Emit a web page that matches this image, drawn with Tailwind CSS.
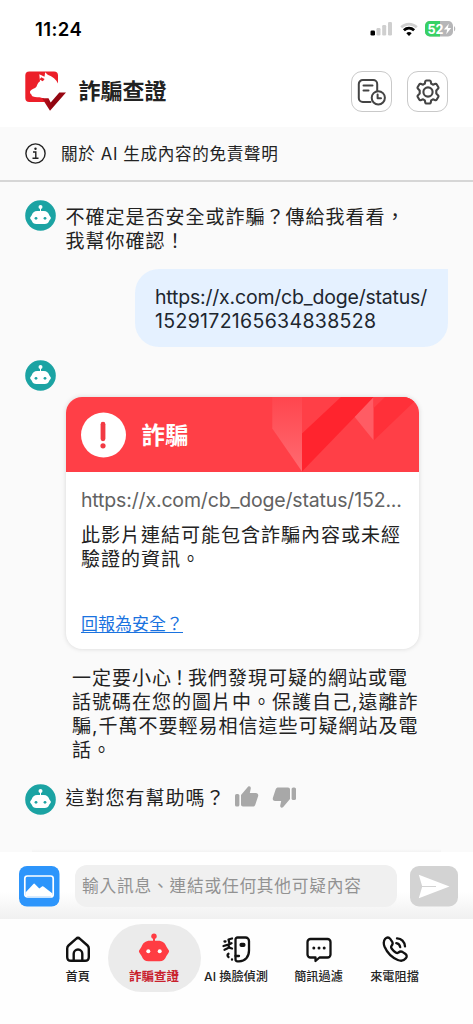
<!DOCTYPE html>
<html lang="zh-Hant">
<head>
<meta charset="utf-8">
<meta name="viewport" content="width=device-width, initial-scale=1">
<title>詐騙查證</title>
<script src="https://cdn.jsdelivr.net/npm/@tailwindcss/browser@4"></script>
</head>
<body class="w-[473px] h-[1024px] overflow-hidden bg-white font-['Inter','Noto_Sans_CJK_TC',sans-serif] text-[#222]">
<svg class="hidden">
  <symbol id="bot" viewBox="0 0 31 31">
    <circle cx="15.5" cy="15.5" r="15.3" fill="#1ba3a3"/>
    <circle cx="15.5" cy="7" r="2" fill="#fff"/>
    <path d="M15 7h1v5h-1z" fill="#fff"/>
    <path d="M12.2 11h6.6c3 0 4.700 1.700 5.500 4.300l1.200 1.700c.5.700.5 1.200 0 1.900l-1.300 1.900c-.8 2.200-2.200 3.200-4.500 3.200h-8.400c-2.300 0-3.700-1-4.500-3.200l-1.300-1.900c-.5-.7-.5-1.200 0-1.900l1.200-1.700C7.500 12.700 9.200 11 12.200 11z" fill="#fff"/>
    <circle cx="11" cy="18.300" r="1.400" fill="#1ba3a3"/><circle cx="20" cy="18.300" r="1.400" fill="#1ba3a3"/>
  </symbol>
</svg>
<div class="flex h-full flex-col">
  <div class="flex h-[57px] shrink-0 items-center justify-between pl-[35px] pr-[17px] pt-px">
    <div class="text-[18.5px] leading-none font-semibold text-black tracking-[0.4px]">11:24</div>
    <div class="flex items-center gap-[7px]">
      <svg width="23" height="16" viewBox="0 0 23 16"><rect x="0.500" y="9.500" width="4.500" height="5" rx="1.300"/><g fill="#cfcfcf"><rect x="6.500" y="7" width="4" height="7.500" rx="1.200"/><rect x="12.200" y="4" width="4" height="10.500" rx="1.200"/><rect x="18" y="1" width="4" height="13.500" rx="1.200"/></g></svg>
      <svg width="18" height="15" viewBox="0 0 18 15" fill="none"><path d="M1.200 5.200C5.800 1 12.200 1 16.800 5.200" stroke="#cfcfcf" stroke-width="2.700"/><path d="M3.900 8.300c3-2.800 7.200-2.800 10.200 0" stroke="#000" stroke-width="2.800"/><path d="M6.300 11.200c1.600-1.500 3.800-1.500 5.400 0L9 14z" fill="#000"/></svg>
      <svg width="31" height="16" viewBox="0 0 31 16"><defs><clipPath id="bat"><rect width="28" height="15.500" rx="4.800"/></clipPath></defs><g clip-path="url(#bat)"><path d="M0 0h28v16H0z" fill="#b6b6b8"/><path d="M0 0h15v16H0z" fill="#38d165"/></g><path d="M29 5.300c1.700.5 1.700 4.400 0 5z" fill="#b6b6b8"/><text x="2.500" y="12.600" font-family="Inter" font-size="13.500" font-weight="700" fill="#fff" textLength="16" lengthAdjust="spacingAndGlyphs">52</text><path d="M23.800 2.700l-4.900 5.900h3.300l-1 4.600 5-6.200h-3.300z" fill="#fff"/></svg>
    </div>
  </div>
  <header class="flex h-[70px] shrink-0 items-center pl-[25px] pr-[25px] pb-px">
    <svg class="mt-[-1px]" width="41" height="40" viewBox="0 0 41 40">
      <defs><linearGradient id="ck" x1="0" x2="1"><stop offset="0" stop-color="#c3101b"/><stop offset=".45" stop-color="#8e0510"/><stop offset="1" stop-color="#9c0712"/></linearGradient></defs>
      <rect x=".3" y=".5" width="32.700" height="30.500" rx="4" fill="#ec1f29"/>
      <path d="M14.300 3.300l5.200 2.500.7-4.500 2.500 2.400c4.800 1.400 8.500 4.700 10.600 9.300V31.500H20l-1.500-4.500c-1.500.2-2.500-.8-4-.8-2.500 0-4.500.2-6.500-.6-.9-.4-1.300-1.300-1.600-2.200-1.500-.8-1.600-2-1.200-3.300 1.500-2.300 4.800-2.200 6.200-4.300.8-1.600 1.200-3.800 3.600-5.500z" fill="#fff"/>
      <path d="M16.300 6.300l3.300 1.600-1.800 2.300-3.300-1.600z" fill="#ec1f29"/>
      <path d="M17 27.200h6.500l2.200 4.200 8.600-9.900H41L25 39.800z" fill="url(#ck)"/>
    </svg>
    <h1 class="ml-[12.500px] -mt-px text-[22px] leading-none font-bold">詐騙查證</h1>
    <div class="ml-auto flex gap-[15.500px]">
      <div class="flex size-[41px] items-center justify-center rounded-[11px] border border-[#c9c9c9]">
        <svg width="30" height="30" viewBox="0 0 30 30" fill="none" stroke="#444" stroke-width="2" stroke-linecap="round" stroke-linejoin="round"><path d="M14.500 25H6.800a4 4 0 0 1-4-4V7a4 4 0 0 1 4-4h10.400a4 4 0 0 1 4 4v6.500"/><path d="M7.500 8.500h9M7.500 13.500h5"/><circle cx="22.300" cy="20.800" r="6.600"/><path d="M21.600 17.500v3.800h3.400"/></svg>
      </div>
      <div class="flex size-[41px] items-center justify-center rounded-[11px] border border-[#c9c9c9]">
        <svg width="26" height="26" viewBox="0 0 26 26" fill="none" stroke="#444" stroke-width="2.100" stroke-linejoin="round"><circle cx="13" cy="13" r="4.600"/><path d="M11.300 1.500h3.400q.8 0 1 .8l.5 2.400 1.700 1 2.500-.9q.8-.3 1.200.4l1.800 3q.4.700-.2 1.300L21.300 11.500v3l1.900 2q.6.600.2 1.300l-1.800 3q-.4.700-1.200.4l-2.500-.9-1.700 1-.5 2.400q-.2.800-1 .8h-3.400q-.8 0-1-.8l-.5-2.400-1.700-1-2.500.9q-.8.300-1.200-.4l-1.800-3q-.4-.7.200-1.300l1.900-2v-3l-1.900-2q-.6-.6-.2-1.300l1.800-3q.4-.7 1.200-.4l2.500.9 1.700-1 .5-2.400q.2-.8 1-.8z"/></svg>
      </div>
    </div>
  </header>
  <div class="flex h-[55px] shrink-0 items-center border-b-2 border-[#d6d6d6] bg-[#fafafa] pl-[25px]">
    <svg width="21" height="21" viewBox="0 0 21 21" fill="none" stroke="#222" stroke-width="1.400"><circle cx="10.500" cy="10.500" r="9.600"/><path d="M8 9h2.800v6M7.500 15.200h6"/><circle cx="10.500" cy="5.800" r="1.200" fill="#222" stroke="none"/></svg>
    <span class="ml-[15px] whitespace-nowrap pt-px text-[16.6px] leading-none tracking-[0.65px]">關於 AI 生成內容的免責聲明</span>
  </div>
  <main class="flex h-[670px] shrink-0 flex-col bg-[#fafafa] text-[19px] leading-[24px] tracking-[1px] whitespace-nowrap">
    <div class="flex items-start pl-[25px] pt-[18px]">
      <svg class="size-[31px]"><use href="#bot"/></svg>
      <p class="ml-[9.500px] pt-[6px]">不確定是否安全或詐騙？傳給我看看，<br>我幫你確認！</p>
    </div>
    <div class="ml-[135px] mt-[15px] h-[78px] w-[313px] rounded-[24px] rounded-tr-none bg-[#e5f1ff] pl-[20px] pt-[16px] text-[19.5px] tracking-[-0.2px] text-[#20262e]">https://x.com/cb_doge/status/<br><span class="tracking-[0.32px]">1529172165634838528</span></div>
    <svg class="ml-[25px] mt-[13px] size-[31px] shrink-0"><use href="#bot"/></svg>
    <section class="ml-[66px] mt-[6px] h-[252px] w-[353px] shrink-0 overflow-hidden rounded-[16px] bg-white shadow-[0_0_5px_rgba(0,0,0,0.14)]">
      <div class="relative flex h-[75px] items-center bg-[#ff3f47] pl-[15px]">
        <svg class="absolute inset-0" width="353" height="75" viewBox="0 0 353 75">
          <defs><linearGradient id="f1" x1="0" y1="0" x2="0" y2="1"><stop offset="0" stop-color="#ff464e"/><stop offset="1" stop-color="#ff6b71"/></linearGradient></defs>
          <path d="M206.300 0H236V74.500L206.300 31.500z" fill="url(#f1)"/>
          <path d="M275 0h33L236 74.500V36.500z" fill="#ff242e"/>
          <path d="M307.700 0V43.500L288.700 20z" fill="#ff5c64"/>
          <path d="M307.700 0H353L307.700 43.500z" fill="#ff3039"/>
          <path d="M307.700 0H319L307.700 11z" fill="#ff3f47"/>
        </svg>
        <svg class="relative" width="46" height="46" viewBox="0 0 46 46"><circle cx="22.500" cy="23" r="22.500" fill="#fff"/><path d="M22 12.200V26.800" stroke="#f23a43" stroke-width="4.800" stroke-linecap="round"/><circle cx="22" cy="33.800" r="2.600" fill="#f23a43"/></svg>
        <b class="relative ml-[14.500px] pt-[2px] text-[23.500px] tracking-normal text-white">詐騙</b>
      </div>
      <div class="px-[15px] pt-[16px]">
        <div class="text-[19.5px] tracking-[-0.16px] text-[#626262]">https://x.com/cb_doge/status/152...</div>
        <p class="mt-[12px]">此影片連結可能包含詐騙內容或未經<br>驗證的資訊。</p>
        <a class="mt-[40px] inline-block text-[17px] leading-[24px] tracking-normal text-[#1a73e0] underline decoration-1 underline-offset-[2px]">回報為安全？</a>
      </div>
    </section>
    <p class="ml-[72px] mt-[18px]">一定要小心<span class="-ml-[2px] -mr-[2px]">！</span>我們發現可疑的網站或電<br>話號碼在您的圖片中。保護自己,遠離詐<br>騙,千萬不要輕易相信這些可疑網站及電<br>話。</p>
    <div class="mt-[21px] flex items-start pl-[25px]">
      <svg class="size-[31px]"><use href="#bot"/></svg>
      <span class="ml-[9.500px] pt-[3px]">這對您有幫助嗎？</span>
      <svg class="ml-[8px] mt-[1px]" width="25" height="24" viewBox="0 0 25 24" fill="#a8a8a8"><rect x="1" y="9" width="4.400" height="12.500" rx="1.600"/><path d="M7 10l7-8.200c1.600-1.200 3 .1 2.800 1.700l-1 4.500h6c2 0 2.900 1.700 2.300 3.300l-2.800 8.400c-.5 1.300-1.300 1.900-2.600 1.900H9c-1.200 0-2-.8-2-2z"/></svg>
      <svg class="ml-[13px] mt-[1px] rotate-180" width="25" height="24" viewBox="0 0 25 24" fill="#a8a8a8"><rect x="1" y="9" width="4.400" height="12.500" rx="1.600"/><path d="M7 10l7-8.200c1.600-1.200 3 .1 2.800 1.700l-1 4.500h6c2 0 2.900 1.700 2.300 3.300l-2.800 8.400c-.5 1.300-1.300 1.900-2.600 1.900H9c-1.200 0-2-.8-2-2z"/></svg>
    </div>
    <div class="mx-8 mt-auto h-[3px] bg-linear-to-b from-transparent to-[#f3f3f3]"></div>
  </main>
  <div class="flex h-[67px] shrink-0 items-start bg-linear-to-b from-white from-60% to-[#f0f0f0] pl-[19px] pt-[13px]">
    <svg class="mt-px" width="41" height="41" viewBox="0 0 41 41"><rect width="40.500" height="40.500" rx="8" fill="#2d95fb"/><rect x="5.800" y="10" width="28.400" height="21" rx="2.500" fill="none" stroke="#fff" stroke-width="1.700"/><path d="M6.500 26.500l7.700-8.300c.7-.8 1.200-.8 1.900 0l4.200 4.300 2.700-2c.7-.5 1.200-.4 1.800.2l8.700 6.800V30.300H6.500z" fill="#fff"/></svg>
    <div class="ml-[15px] flex h-[42px] w-[322px] items-center rounded-[12px] bg-[#f0f0f0] pl-[7px] pt-[2px] text-[16.7px] tracking-[0.8px] whitespace-nowrap text-[#929292]">輸入訊息、連結或任何其他可疑內容</div>
    <svg class="ml-[13px] mt-px" width="49" height="41" viewBox="0 0 49 41"><rect width="48" height="40.500" rx="9" fill="#d3d3d3"/><path d="M8.800 8.800L39.500 20.500 8.800 32.300l3.300-11.300H26v-1H12.100z" fill="#fff"/></svg>
  </div>
  <nav class="flex h-[105px] shrink-0 items-start bg-[#fefefe] pl-[48px] pt-[5px] text-center text-[12.2px] leading-[16px] whitespace-nowrap">
    <div class="flex w-[59.500px] flex-col items-center pt-[11px]">
      <svg width="28" height="28" viewBox="0 0 28 28" fill="none" stroke="#111" stroke-width="2.400" stroke-linejoin="round"><path d="M4.500 10.500L12 3.800c1.300-1.200 2.700-1.200 4 0l7.500 6.700c1 .9 1.300 1.700 1.300 3V22c0 2.500-1.300 3.800-3.800 3.800H7c-2.500 0-3.800-1.300-3.800-3.800v-8.500c0-1.300.3-2.100 1.300-3z"/><path d="M9.700 25.500v-6.700a4.300 4.300 0 0 1 8.600 0v6.700"/></svg>
      <span class="mt-[6px] font-medium">首頁</span>
    </div>
    <div class="flex h-[68px] w-[93px] flex-col items-center rounded-[34px] bg-[#ebebeb] pt-[9px]">
      <svg width="32" height="30" viewBox="0 0 32 30" fill="#ff3c43"><circle cx="16" cy="3.300" r="2.700"/><path d="M15 4h2v5h-2z"/><path d="M12 7.700h8c4.600 0 7.300 2.400 8.600 6.300l1.800 2.700c.9 1.300.9 1.900 0 3.200l-2 3c-1.300 3.500-3.300 5.300-7 5.300H10.600c-3.700 0-5.700-1.800-7-5.300l-2-3c-.9-1.300-.9-1.900 0-3.200L3.400 14C4.700 10.100 7.400 7.700 12 7.700z"/><circle cx="10.300" cy="18.300" r="2" fill="#fff"/><circle cx="21.700" cy="18.300" r="2" fill="#fff"/></svg>
      <b class="mt-[6px] text-[12.5px] leading-[16px] text-[#c9202c]">詐騙查證</b>
    </div>
    <div class="flex w-[71px] flex-col items-center pt-[11px]">
      <svg width="30" height="28" viewBox="0 0 30 28" fill="none" stroke="#111" stroke-width="2.300" stroke-linecap="round" stroke-linejoin="round"><path d="M16.500 2.500h8a3.500 3.500 0 0 1 3.500 3.500v9.500c0 6.300-3.700 10.800-10 10.800h-1.500a2 2 0 0 1-2-2V4.500a2 2 0 0 1 2-2z"/><path d="M14.500 21h3.500"/><rect x="19.600" y="9" width="3.800" height="1.800" rx=".8" fill="#111"/><path d="M11 3.500L7.500 4.500l.8 3.200M3.500 6.500h1M2.500 11l4.800-1.300 3.200-1.400M7.300 9.700l1 3 2.700.8M3.500 14.700l3.200-1.500M7.500 18.800c-1.300.8-1.300 2.300 0 3.200M11 24.500v.2"/></svg>
      <span class="mt-[6px] font-medium">AI 換臉偵測</span>
    </div>
    <div class="ml-[7px] flex w-[80px] flex-col items-center pt-[11px]">
      <svg width="28" height="28" viewBox="0 0 28 28" fill="none" stroke="#111" stroke-width="2.300" stroke-linejoin="round"><path d="M5.500 4h17a3 3 0 0 1 3 3v12.500a3 3 0 0 1-3 3H14.500L10.500 26v-3.500h-5a3 3 0 0 1-3-3V7a3 3 0 0 1 3-3z"/><g fill="#111" stroke="none"><circle cx="8.800" cy="13" r="1.500"/><circle cx="14" cy="13" r="1.500"/><circle cx="19.200" cy="13" r="1.500"/></g></svg>
      <span class="mt-[6px] font-medium">簡訊過濾</span>
    </div>
    <div class="flex w-[72px] flex-col items-center pt-[11px]">
      <svg width="28" height="28" viewBox="0 0 28 28" fill="none" stroke="#111" stroke-width="2.300" stroke-linecap="round" stroke-linejoin="round"><path d="M4.200 3.800c1.800-1.800 3.600-1.700 5 .1l1.900 2.700c1 1.600.8 2.700-.5 4.200-.8 1-.7 1.700.2 2.900 1.200 1.600 2.300 2.700 3.900 3.800 1.200.8 1.900.8 2.800 0 1.500-1.200 2.600-1.400 4.200-.4l2.500 1.700c1.800 1.300 1.900 2.800.6 4.500-2 2.600-4.700 3-8 1.700-6-2.500-10.700-7.400-13.200-13.200-1.200-3-1.300-5.700.6-8z"/><path d="M15.300 8.200c2.200.3 3.500 1.600 3.900 3.900M16 3.300c4.500.3 7.400 3.300 8 8"/></svg>
      <span class="mt-[6px] font-medium">來電阻擋</span>
    </div>
  </nav>
</div>
</body>
</html>
